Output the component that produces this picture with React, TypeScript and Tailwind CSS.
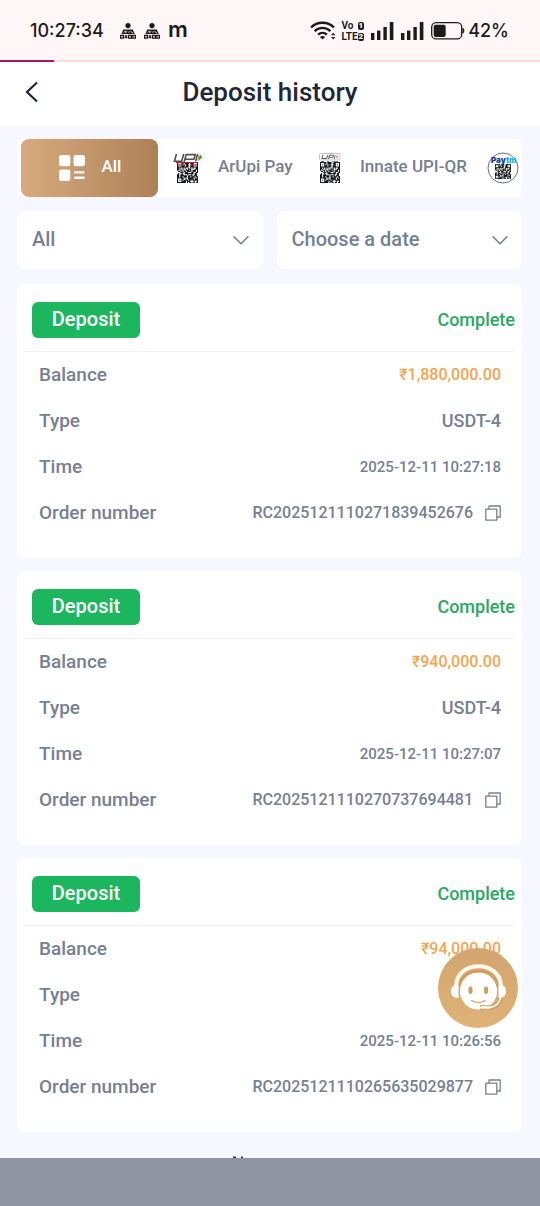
import type { ReactNode } from "react";

type Deposit = {
  amount: string;
  type: string;
  time: string;
  order: string;
};

const deposits: Deposit[] = [
  {
    amount: "₹1,880,000.00",
    type: "USDT-4",
    time: "2025-12-11 10:27:18",
    order: "RC2025121110271839452676",
  },
  {
    amount: "₹940,000.00",
    type: "USDT-4",
    time: "2025-12-11 10:27:07",
    order: "RC2025121110270737694481",
  },
  {
    amount: "₹94,000.00",
    type: "USDT-4",
    time: "2025-12-11 10:26:56",
    order: "RC2025121110265635029877",
  },
];

const QR_SIZE = 19;

// finder squares in three corners, scattered modules everywhere else
function isDark(x: number, y: number) {
  for (const [cx, cy] of [[2, 2], [QR_SIZE - 3, 2], [2, QR_SIZE - 3]]) {
    const d = Math.max(Math.abs(x - cx), Math.abs(y - cy));
    if (d <= 2) return d !== 1;
  }
  return (x * 7 + y * 13 + x * y * 5 + ((x * x + y * 3) % 7)) % 9 < 6;
}

function QrModules({ x, y, width, height }: { x: number; y: number; width: number; height: number }) {
  let d = "";
  for (let row = 0; row < QR_SIZE; row++) {
    for (let col = 0; col < QR_SIZE; col++) {
      if (isDark(col, row)) d += `M${col} ${row}h1v1h-1z`;
    }
  }
  return (
    <svg x={x} y={y} width={width} height={height} viewBox={`0 0 ${QR_SIZE} ${QR_SIZE}`} preserveAspectRatio="none">
      <path d={d} fill="#16181b" />
    </svg>
  );
}

function AllIcon() {
  return (
    <svg className="h-7 w-7 shrink-0" viewBox="0 0 28 28" fill="white" aria-hidden="true">
      <rect x="1" y="1" width="11.3" height="11.3" rx="2.2" />
      <rect x="15.6" y="1" width="11.3" height="11.3" rx="2.2" />
      <rect x="1" y="15.6" width="11.3" height="11.3" rx="2.2" />
      <rect x="16" y="17.2" width="10.6" height="2.4" rx="1" />
      <rect x="16" y="22.6" width="10.6" height="2.4" rx="1" />
    </svg>
  );
}

function UpiIcon() {
  return (
    <svg className="h-[30px] w-[30px] shrink-0" viewBox="0 0 30 30" fill="none" aria-hidden="true">
      <QrModules x={4} y={9} width={21} height={21} />
      <path d="M3 9.6h22M5 12h6M17 12h7" stroke="#b8232a" strokeWidth="1" />
      <path
        d="M3.5 1 1.4 8.2h7.2L10.8 1M11 9.4l2.2-7.800h9l-1.300 4.600h-8.600M22.600 8.400l2-7.400"
        stroke="#4e5053"
        strokeWidth="1.6"
      />
      <path d="m25.8 1-1.8 7 2.8-3.6z" fill="#f58220" />
      <path d="m27 1.4-1.800 6.800 4.200-4z" fill="#2f9e48" />
    </svg>
  );
}

function InnateIcon() {
  return (
    <svg className="h-[30px] w-[30px] shrink-0" viewBox="0 0 30 30" fill="none" aria-hidden="true">
      <rect x="4.5" y=".5" width="20.5" height="6.4" rx="1" stroke="#c3c4c8" />
      <path d="m8 1.8-1.2 3.7h5L13 1.800M13.400 6l1.200-3.800h4l-.8 2.200h-3.500M19 6l1.200-3.800" stroke="#5a5c60" />
      <path d="m22 1.8-1.2 3.9 2.6-1.9z" fill="#f58220" />
      <path d="M6 8.5h3M12 8.5h2" stroke="#3b6fb5" />
      <path d="M17 8.5h6" stroke="#8c8e92" />
      <QrModules x={5} y={9} width={20} height={21} />
    </svg>
  );
}

function PaytmIcon() {
  return (
    <svg className="h-8 w-8 shrink-0" viewBox="0 0 32 32" aria-hidden="true">
      <circle cx="16" cy="16" r="15" fill="white" stroke="#6d7076" />
      <QrModules x={8} y={12} width={16} height={15} />
      <text x="4" y="11" fontSize="8" fontWeight="900" fontFamily="Inter, sans-serif" fill="#12408f">
        Pay<tspan fill="#13b5ea">tm</tspan>
      </text>
    </svg>
  );
}

function Chevron() {
  return (
    <svg
      className="pointer-events-none absolute right-3 top-1/2 h-5 w-5 -translate-y-1/2"
      viewBox="0 0 20 20"
      fill="none"
      aria-hidden="true"
    >
      <path d="m3 6.8 7 7 7-7" stroke="#777f92" strokeWidth="1.6" strokeLinecap="round" strokeLinejoin="round" />
    </svg>
  );
}

function NoticeIcon() {
  return (
    <svg className="h-4 w-4" viewBox="0 0 16 16" fill="none" aria-hidden="true">
      <circle cx="8" cy="2.6" r="2.6" fill="#1d1a1b" />
      <path d="M1.6 11 3.2 6.4h9.6l2 4.6z" fill="#1d1a1b" />
      <path d="m3.8 9.8 1.4-2 .6 2 1.4-2M8.6 9.8l.8-1.8M10.8 8l1 1.800h1.400" stroke="#fff7f7" strokeWidth=".7" />
      <path
        d="M.6 12.4h2.8v2.8H.6zM4.800 12.400l2.400 2.800M7.200 12.400l-2.400 2.800M8.600 12.400h2.800v2.800H8.600zM12.800 15.200v-2.800h2.600v2.800z"
        stroke="#1d1a1b"
        strokeWidth="1.3"
      />
    </svg>
  );
}

function SignalBars() {
  return (
    <svg className="h-[18px] w-6" viewBox="0 0 24 18" fill="#1d1a1b" aria-hidden="true">
      <rect x="1" y="11" width="3.4" height="7" />
      <rect x="7" y="8.6" width="3.4" height="9.4" />
      <rect x="13.4" y="5" width="3.4" height="13" />
      <rect x="19.8" y="0" width="3.6" height="18" />
    </svg>
  );
}

function StatusBar() {
  return (
    <div className="flex h-15 items-center justify-between bg-[#fff7f7] pl-[30px] pr-[31px] pt-[2px] font-[Inter,sans-serif] text-[#1d1a1b]">
      <div className="flex items-center">
        <span className="text-lg font-medium">10:27:34</span>
        <span className="ml-4 flex gap-2">
          <NoticeIcon />
          <NoticeIcon />
        </span>
        <span className="ml-2 pb-1 text-[22px] font-semibold leading-6">m</span>
      </div>

      <div className="flex items-center">
        <svg className="h-5 w-[26px]" viewBox="0 0 26 20" fill="none" stroke="#1d1a1b" aria-hidden="true">
          <path d="M1 6.5C7.5.2 17.5.2 24 6.5" strokeWidth="2.4" />
          <path d="M4.6 10.2c4.6-4.4 11.2-4.4 15.8 0" strokeWidth="2.4" />
          <path d="M8.1 13.7c2.6-2.5 6.2-2.5 8.8 0" strokeWidth="2.4" />
          <path d="M12.5 18.6 9.9 16c1.5-1.3 3.7-1.3 5.2 0z" fill="#1d1a1b" stroke="none" />
          <path d="m21 14.2 2.2-2.4 2.2 2.4zM21 16l2.2 2.4 2.2-2.4z" fill="#1d1a1b" stroke="none" />
        </svg>
        <span className="ml-[5px] flex flex-col gap-px font-[Roboto,sans-serif] text-[10px] font-bold leading-[10px]">
          <span className="flex items-center justify-between gap-1">
            Vo <b className="rounded-xs bg-[#1d1a1b] px-px text-[8px] leading-2 text-white">1</b>
          </span>
          <span className="flex items-center">
            LTE<b className="rounded-xs bg-[#1d1a1b] px-px text-[8px] leading-2 text-white">2</b>
          </span>
        </span>
        <span className="ml-[6px] flex gap-[6px]">
          <SignalBars />
          <SignalBars />
        </span>
        <svg className="ml-[7px] h-[18px] w-[34px]" viewBox="0 0 34 18" fill="none" aria-hidden="true">
          <rect x=".7" y=".7" width="30" height="16.2" rx="4.5" stroke="#1d1a1b" strokeWidth="1.3" />
          <rect x="2.7" y="2.7" width="12" height="12.2" rx="2" fill="#1d1a1b" />
          <path d="M31.4 5.8c2.6.6 2.6 5.4 0 6z" fill="#1d1a1b" />
        </svg>
        <span className="ml-[3px] text-lg font-medium">42%</span>
      </div>
    </div>
  );
}

function Row({ label, children }: { label: string; children: ReactNode }) {
  return (
    <div className="flex h-[46px] items-center justify-between">
      <dt className="text-[19px]">{label}</dt>
      <dd className="flex items-center">{children}</dd>
    </div>
  );
}

function DepositCard({ amount, type, time, order }: Deposit) {
  return (
    <article className="rounded-lg bg-white px-[7px] pb-[22px] pt-[18px]">
      <div className="flex items-center justify-between border-b border-[#f1f1f5] pb-[13px] pl-2">
        <h2 className="flex h-9 w-[108px] items-center justify-center rounded-md bg-[#1bb65e] pb-[2px] text-xl text-white">
          Deposit
        </h2>
        <span className="text-lg text-[#28a963]">Complete</span>
      </div>

      <dl className="pl-[15px] pr-[14px]">
        <Row label="Balance">
          <span className="text-base text-[#f5a552]">{amount}</span>
        </Row>
        <Row label="Type">
          <span className="text-lg">{type}</span>
        </Row>
        <Row label="Time">
          <span className="text-[15px]">{time}</span>
        </Row>
        <Row label="Order number">
          <span className="text-base">{order}</span>
          <button type="button" aria-label="Copy order number" className="ml-3">
            <svg className="h-4 w-4" viewBox="0 0 16 16" fill="none" stroke="#777f92" strokeWidth="1.3">
              <path d="M.8 4.2h11v11H.8z" strokeLinejoin="round" />
              <path d="M4 4V1h11.2v11H12" strokeLinejoin="round" />
            </svg>
          </button>
        </Row>
      </dl>
    </article>
  );
}

function SupportButton() {
  return (
    <button
      type="button"
      aria-label="Customer support"
      className="fixed bottom-[178px] right-[22px] h-20 w-20 rounded-full bg-linear-to-b from-[#d2a570] to-[#dfb276]"
    >
      <svg viewBox="0 0 80 80" fill="none" aria-hidden="true">
        <circle cx="40.5" cy="43" r="18.6" fill="white" />
        <path d="M18 38C19 11.5 62 11.5 63 38" stroke="#fff8ed" strokeWidth="4" />
        <path d="M21.5 38c3-20 35-20 38 0" stroke="#cf9d61" strokeWidth="2.4" />
        <path d="M20.5 36.5v13.3c-4.6.8-7.5-2.3-7.5-6.6s2.9-7.4 7.5-6.7z" fill="white" />
        <path d="M60.5 36.5v13.3c4.6.8 7.5-2.3 7.5-6.6s-2.9-7.4-7.5-6.7z" fill="white" />
        <rect x="30.5" y="38.5" width="4" height="7.5" rx="2" fill="#cf9d61" />
        <rect x="46" y="38.5" width="4" height="7.5" rx="2" fill="#cf9d61" />
        <path d="M33.5 52.5c4 2.6 9.500 2.600 13.500 0" stroke="#cf9d61" strokeWidth="1.2" strokeLinecap="round" />
        <path d="M62.5 50.5c-1.5 6-5.5 8.500-11 9h-9.500" stroke="#cf9d61" strokeWidth="4.6" />
        <path d="M62.5 50c-1.5 6-5.5 9-11 9.500" stroke="white" strokeWidth="1.6" />
        <path d="M43.5 59.5h8" stroke="white" strokeWidth="2.6" strokeLinecap="round" />
      </svg>
    </button>
  );
}

export default function App() {
  return (
    <div className="flex min-h-screen flex-col bg-[#f6f7ff] font-[Roboto,sans-serif] font-medium text-[#777f92]">
      <StatusBar />
      <div className="h-[2px] bg-[#ffd9df]">
        <div className="h-full w-1/10 bg-[#a8155f]" />
      </div>

      <header className="grid h-16 grid-cols-[64px_1fr_64px] items-center bg-white pb-1 text-[#1e2637]">
        <button type="button" aria-label="Back" className="flex h-full items-center pl-[25px]">
          <svg className="h-[22px] w-[14px]" viewBox="0 0 14 22" fill="none" aria-hidden="true">
            <path d="M12 1.5 2 11l10 9.5" stroke="currentColor" strokeWidth="2.2" />
          </svg>
        </button>
        <h1 className="text-center text-[26px] leading-8">Deposit history</h1>
      </header>

      <main className="pb-[26px] pl-[17px] pr-[18px] pt-[13px]">
        <nav className="flex h-[58px] overflow-hidden rounded-md bg-white pl-1 text-[17px]" aria-label="Payment method">
          <button
            type="button"
            className="flex w-[137px] shrink-0 items-center justify-center gap-4 rounded-lg bg-linear-to-r from-[#d8ab7e] to-[#ad8058] text-white"
          >
            <AllIcon />
            <span className="pb-[2px]">All</span>
          </button>
          <button type="button" className="flex w-[142px] shrink-0 items-center gap-[15px] whitespace-nowrap pl-[15px]">
            <UpiIcon />
            <span className="pb-[2px]">ArUpi Pay</span>
          </button>
          <button type="button" className="flex w-[172px] shrink-0 items-center gap-[15px] whitespace-nowrap pl-[15px]">
            <InnateIcon />
            <span className="pb-[2px]">Innate UPI-QR</span>
          </button>
          <button type="button" aria-label="Paytm QR" className="flex shrink-0 items-center pl-[15px]">
            <PaytmIcon />
          </button>
        </nav>

        <div className="mt-[14px] grid grid-cols-2 gap-[14px] text-xl">
          <div className="relative">
            <select
              aria-label="Deposit status"
              className="h-[58px] w-full appearance-none rounded-lg bg-white pb-[2px] pl-[15px] pr-10"
            >
              <option>All</option>
            </select>
            <Chevron />
          </div>
          <button type="button" className="relative h-[58px] rounded-lg bg-white pb-[2px] pl-[15px] text-left">
            Choose a date
            <Chevron />
          </button>
        </div>

        <section className="mt-[15px] flex flex-col gap-[13px]" aria-label="Deposits">
          {deposits.map((deposit) => (
            <DepositCard key={deposit.order} {...deposit} />
          ))}
        </section>
      </main>

      <div className="relative mt-auto h-12 bg-[#9194a2]">
        <svg className="absolute -top-[2px] left-[232px] h-[2px] w-3" viewBox="0 0 12 2" aria-hidden="true">
          <path d="M1 .5h3V2H1zM9 .5h2V2H9z" fill="#34363f" />
        </svg>
      </div>

      <SupportButton />
    </div>
  );
}
